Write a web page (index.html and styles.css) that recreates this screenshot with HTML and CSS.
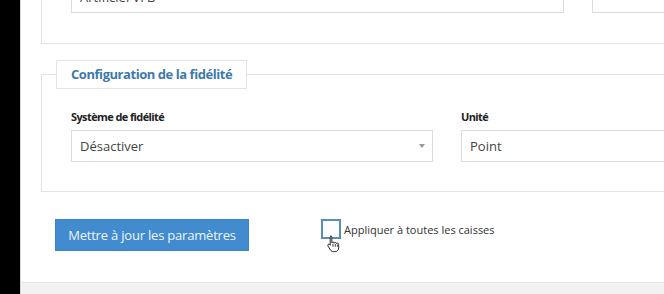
FILE: index.html
```html
<!DOCTYPE html>
<html>
<head>
<meta charset="utf-8">
<title>Paramètres de la caisse</title>
<link rel="stylesheet" href="styles.css">
</head>
<body>
<div class="sidebar"></div>
<div class="main">
	<div class="content">
		<div class="panel top_panel">
			<div class="row">
				<div class="field wide"><input type="text" class="input" value="Artificiel VFB"></div>
				<div class="field narrow"><input type="text" class="input" value=""></div>
			</div>
		</div>

		<fieldset class="panel loyalty">
			<legend>Configuration de la fidélité</legend>
			<div class="row">
				<div class="field half">
					<label class="label">Système de fidélité</label>
					<div class="select">
						<span>Désactiver</span>
						<span class="arrow"></span>
					</div>
				</div>
				<div class="field half">
					<label class="label">Unité</label>
					<input type="text" class="input" value="Point">
				</div>
			</div>
		</fieldset>

		<div class="actions">
			<button type="button" class="update_button">Mettre à jour les paramètres</button>
			<label class="apply">
				<span class="checkbox"></span>
				<span>Appliquer à toutes les caisses</span>
				<svg class="cursor" width="13" height="18" viewBox="0 0 13 18">
					<path d="M3.5 1.2c.8 0 1.3.6 1.3 1.3v5.3c.2-.5.7-.8 1.2-.8.7 0 1.2.5 1.2 1.1.2-.4.6-.7 1.1-.7.7 0 1.2.5 1.2 1.2.2-.3.6-.5 1-.5.7 0 1.2.5 1.2 1.2v3.4c0 2.2-1.4 3.900-3.5 3.9H6.3c-1.3 0-2.1-.6-2.8-1.6L1 11.1c-.4-.6-.3-1.3.2-1.7.5-.4 1.2-.3 1.6.2l.4.6V2.5c0-.7.5-1.3 1.3-1.3z" fill="#fff" stroke="#111" stroke-width="0.9"/>
					<path d="M6 8.6v3.2M8.3 9v2.8M10.4 9.6v2.2" stroke="#111" stroke-width="0.8"/>
				</svg>
			</label>
		</div>
	</div>
	<div class="footer"></div>
</div>
</body>
</html>
```

FILE: styles.css
```css
html, body {
	margin: 0;
	height: 100%;
}
body {
	display: flex;
	font-family: "Open Sans", "Noto Sans", sans-serif;
	color: #333;
	background: #fff;
	overflow: hidden;
}
.sidebar {
	width: 20px;
	flex: none;
	background: #000;
	border-right: 1px solid #d6d6d6;
}
.main {
	flex: 1;
	display: flex;
	flex-direction: column;
	overflow: hidden;
}
.content {
	flex: 1;
	width: 900px;
}
.panel {
	margin: 0 0 0 20px;
	border: 1px solid #e3e3e3;
	background: #fff;
}
.top_panel {
	margin-top: -50px;
	padding: 30px 0 30px 29px;
}
.row {
	display: flex;
	gap: 28px;
}
.wide {
	width: 493px;
}
.narrow {
	width: 200px;
}
.half {
	width: 362px;
}
.input, .select {
	box-sizing: border-box;
	display: block;
	width: 100%;
	height: 32px;
	margin: 0;
	padding: 0 8px;
	border: 1px solid #dcdcdc;
	background: #fff;
	font: 13px "Open Sans", "Noto Sans", sans-serif;
	color: #444;
	outline: none;
}
.loyalty {
	margin-top: 16px;
	padding: 0 0 29px 29px;
	min-width: 0;
}
.loyalty legend {
	margin-left: -15px;
	padding: 0 14px;
	height: 27px;
	line-height: 26px;
	border: 1px solid #e3e3e3;
	background: #fff;
	font-size: 13px;
	font-weight: bold;
	letter-spacing: -0.45px;
	color: #3d79ad;
}
.loyalty .row {
	padding-top: 20px;
}
.label {
	display: block;
	height: 21px;
	font-size: 11px;
	font-weight: bold;
	letter-spacing: -0.6px;
	color: #222;
}
.select {
	display: flex;
	align-items: center;
	justify-content: space-between;
}
.arrow {
	width: 0;
	height: 0;
	margin-right: -1px;
	border-left: 3px solid transparent;
	border-right: 3px solid transparent;
	border-top: 4px solid #999;
}
.actions {
	display: flex;
	align-items: flex-start;
	margin: 27px 0 0 34px;
}
.update_button {
	width: 194px;
	height: 32px;
	padding: 0;
	border: 1px solid #3a85c8;
	background: #428bcf;
	color: #eef5fc;
	font: 13px "Open Sans", "Noto Sans", sans-serif;
	letter-spacing: -0.2px;
}
.apply {
	position: relative;
	display: flex;
	align-items: center;
	gap: 3px;
	margin-left: 72px;
	height: 20px;
	font-size: 11px;
	color: #333;
}
.checkbox {
	box-sizing: border-box;
	width: 20px;
	height: 20px;
	border: 2px solid #5b8db5;
	background: #fbfdff;
}
.cursor {
	position: absolute;
	left: 6px;
	top: 16px;
}
.footer {
	height: 11px;
	background: #f2f2f2;
	border-top: 1px solid #e6e6e6;
}
```
